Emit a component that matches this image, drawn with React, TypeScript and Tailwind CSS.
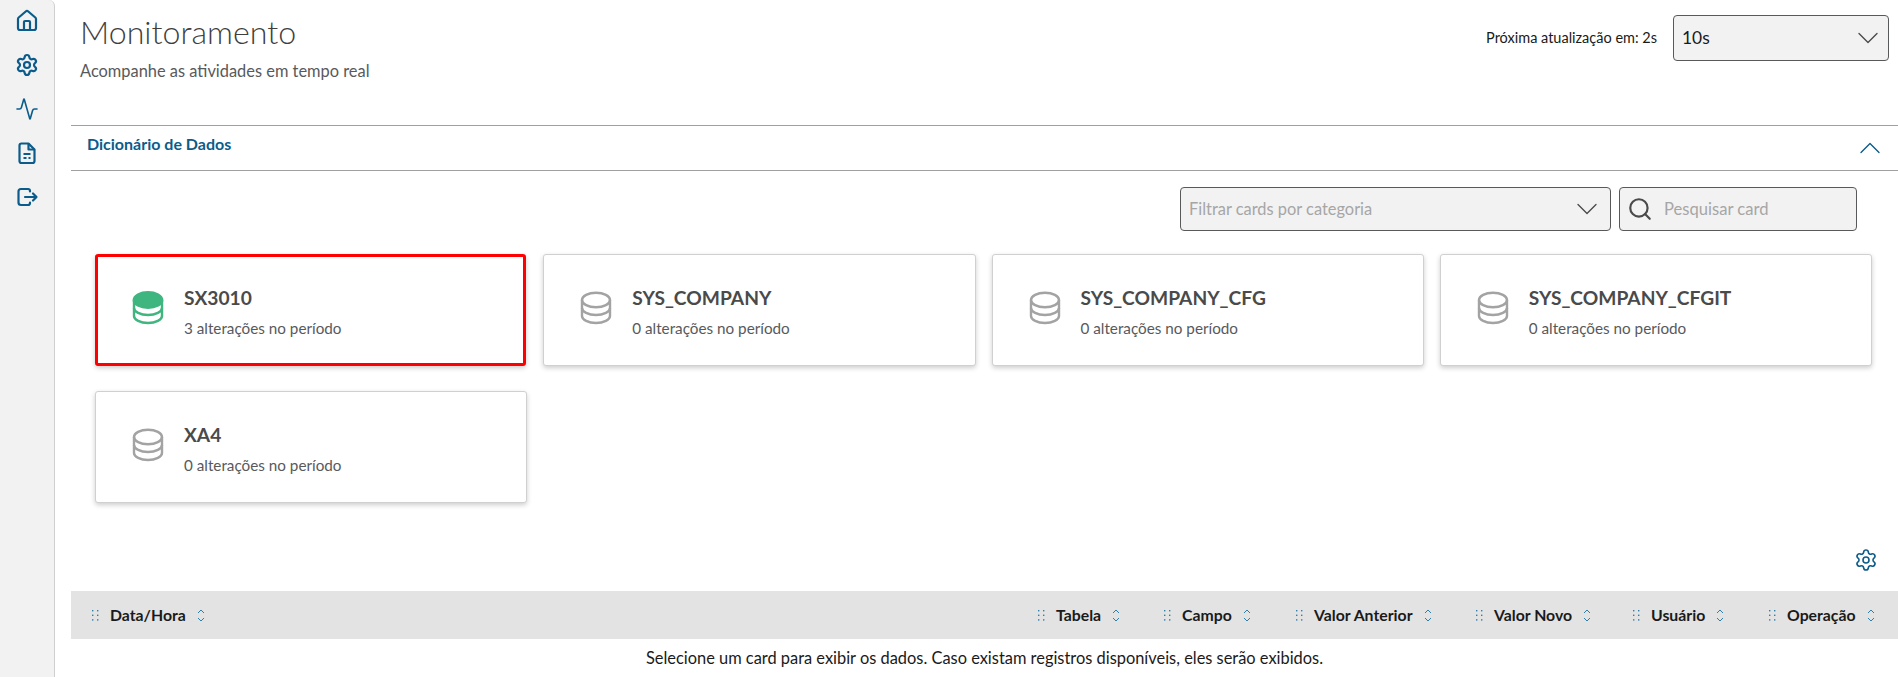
import { Activity, ChevronDown, ChevronUp, House, Search, Settings } from "lucide-react";

const blue = "text-[#0b5c8a]";

function Database({ active }: { active?: boolean }) {
  const color = active ? "#3fb57f" : "#a3a3a3";
  return (
    <svg width="32" height="34" viewBox="0 0 32 34" fill="none" stroke={color} strokeWidth="2.4" className="-mt-[5px]">
      {active ? (
        <ellipse cx="16" cy="9" rx="14.2" ry="7.8" fill={color} />
      ) : (
        <ellipse cx="16" cy="9" rx="14" ry="7.3" />
      )}
      <path d="M2 9v16c0 3.8 6.3 7 14 7s14-3.2 14-7V9" />
      <path d="M2 17c0 3.8 6.3 7 14 7s14-3.2 14-7" />
    </svg>
  );
}

function Grip() {
  return (
    <svg width="7" height="11" viewBox="0 0 7 11" fill="#2f7fa8" className="shrink-0">
      <rect x="0" y="0" width="1.4" height="1.4" />
      <rect x="5" y="0" width="1.4" height="1.4" />
      <rect x="0" y="4.6" width="1.4" height="1.4" />
      <rect x="5" y="4.6" width="1.4" height="1.4" />
      <rect x="0" y="9.2" width="1.4" height="1.4" />
      <rect x="5" y="9.2" width="1.4" height="1.4" />
    </svg>
  );
}

function Sort() {
  return (
    <svg width="8" height="13" viewBox="0 0 8 13" fill="none" stroke="#2f7fa8" strokeWidth="1" className="shrink-0">
      <path d="M1 4l3-3 3 3" />
      <path d="M1 9l3 3 3-3" />
    </svg>
  );
}

function Field({ children, className }: { children: React.ReactNode; className: string }) {
  return (
    <div className={`flex items-center rounded-[4px] border border-[#58595b] bg-[#f2f2f2] ${className}`}>
      {children}
    </div>
  );
}

function Card({ name, count, active }: { name: string; count: number; active?: boolean }) {
  return (
    <div
      className={`flex items-center bg-white rounded-[3px] shadow-[0_2px_5px_rgba(0,0,0,0.2)] h-[112px] ${
        active ? "border-[3px] border-[#ff0000] pl-[34px] mr-px" : "border border-[#d0d0d0] pl-[36px]"
      }`}
    >
      <Database active={active} />
      <div className="ml-[20px] flex flex-col">
        <span className="mt-[4px] text-[19.2px] leading-[24px] font-bold text-[#4a4a4a]">{name}</span>
        <span className="mt-[8px] text-[15.25px] leading-[20px] text-[#58595b]">{count} alterações no período</span>
      </div>
    </div>
  );
}

const columns = [
  { label: "Tabela", width: "w-[126px]" },
  { label: "Campo", width: "w-[132px]" },
  { label: "Valor Anterior", width: "w-[180px]" },
  { label: "Valor Novo", width: "w-[157px]" },
  { label: "Usuário", width: "w-[136px]" },
  { label: "Operação", width: "w-[143px]" },
];

export default function App() {
  return (
    <div className="flex h-screen overflow-hidden bg-white font-['Lato',sans-serif]">
      <aside className="w-[55px] shrink-0 flex flex-col items-center gap-[20px] pt-[9px] bg-[#f2f2f2] border-r border-[#cfcfcf] rounded-tr-[6px]">
        <House size={24} strokeWidth={2.2} className={blue} />
        <Settings size={24} strokeWidth={2.2} className={blue} />
        <Activity size={24} strokeWidth={1.6} className={blue} />
        <svg width="24" height="24" viewBox="0 0 24 24" fill="none" stroke="#0b5c8a" strokeWidth="2.2" strokeLinejoin="round">
          <path d="M4.5 4.5a2 2 0 0 1 2-2h7l6 6v11.5a2 2 0 0 1-2 2h-11a2 2 0 0 1-2-2z" />
          <path d="M13.5 2.5v6h6M8.5 13h7M8.5 17h3M13.5 17h2" />
        </svg>
        <svg width="24" height="24" viewBox="0 0 24 24" fill="none" stroke="#0b5c8a" strokeWidth="2.2" strokeLinecap="round" strokeLinejoin="round">
          <path d="M15 6.5V6a2 2 0 0 0-2-2H6a2.5 2.5 0 0 0-2.5 2.5v11A2.5 2.5 0 0 0 6 20h7a2 2 0 0 0 2-2v-.5" />
          <path d="M10 12h11M18 8.5l3.5 3.5-3.5 3.5" />
        </svg>
      </aside>

      <main className="flex-1 min-w-0 pl-[16px]">
        <div className="flex items-start justify-between h-[125px] pl-[9px] pr-[9px]">
          <div className="pt-[10px]">
            <h1 className="text-[32.2px] leading-[44px] font-light text-[#3f3f3f]">Monitoramento</h1>
            <p className="mt-[7px] text-[16.4px] leading-[20px] text-[#58595b]">Acompanhe as atividades em tempo real</p>
          </div>
          <div className="flex items-center pt-[15px]">
            <span className="text-[14.5px] text-[#1a1a1a] mr-[16px]">Próxima atualização em: 2s</span>
            <Field className="w-[216px] h-[46px] justify-between pl-[8px] pr-[2px]">
              <span className="text-[17.4px] text-[#1a1a1a]">10s</span>
              <ChevronDown size={36} strokeWidth={0.9} className="text-[#4a4a4a]" />
            </Field>
          </div>
        </div>

        <div className="flex items-center justify-between h-[46px] border-y border-[#a0a0a0] pl-[16px] pr-[10px]">
          <span className={`text-[16px] font-bold ${blue} -mt-[9px]`}>Dicionário de Dados</span>
          <ChevronUp size={36} strokeWidth={0.9} className={blue} />
        </div>

        <div className="flex justify-end gap-[8px] pt-[16px] pr-[41px]">
          <Field className="w-[431px] h-[44px] justify-between pl-[8px] pr-[5px]">
            <span className="text-[16.4px] text-[#a6a6a6]">Filtrar cards por categoria</span>
            <ChevronDown size={36} strokeWidth={0.9} className="text-[#4a4a4a]" />
          </Field>
          <Field className="w-[238px] h-[44px] pl-[7px]">
            <Search size={26} strokeWidth={2} className="text-[#4a4a4a]" />
            <span className="ml-[11px] text-[16.6px] text-[#a6a6a6]">Pesquisar card</span>
          </Field>
        </div>

        <div className="grid grid-cols-4 gap-x-[16px] gap-y-[25px] mt-[23px] pl-[24px] pr-[26px]">
          <Card name="SX3010" count={3} active />
          <Card name="SYS_COMPANY" count={0} />
          <Card name="SYS_COMPANY_CFG" count={0} />
          <Card name="SYS_COMPANY_CFGIT" count={0} />
          <Card name="XA4" count={0} />
        </div>

        <div className="flex justify-end pt-[45px] pr-[20px]">
          <Settings size={24} strokeWidth={1.6} className={blue} />
        </div>

        <div className="flex items-center h-[48px] mt-[19px] bg-[#e3e3e3]">
          <div className="flex-1 flex items-center gap-[11px] pl-[21px]">
            <Grip />
            <span className="text-[15.8px] font-bold text-[#1a1a1a]">Data/Hora</span>
            <Sort />
          </div>
          {columns.map((col) => (
            <div key={col.label} className={`flex items-center gap-[11px] pl-[14px] ${col.width}`}>
              <Grip />
              <span className="text-[15.8px] font-bold text-[#1a1a1a]">{col.label}</span>
              <Sort />
            </div>
          ))}
        </div>
        <p className="mt-[9px] leading-[20px] text-center text-[16.4px] text-[#1a1a1a]">
          Selecione um card para exibir os dados. Caso existam registros disponíveis, eles serão exibidos.
        </p>
      </main>
    </div>
  );
}
